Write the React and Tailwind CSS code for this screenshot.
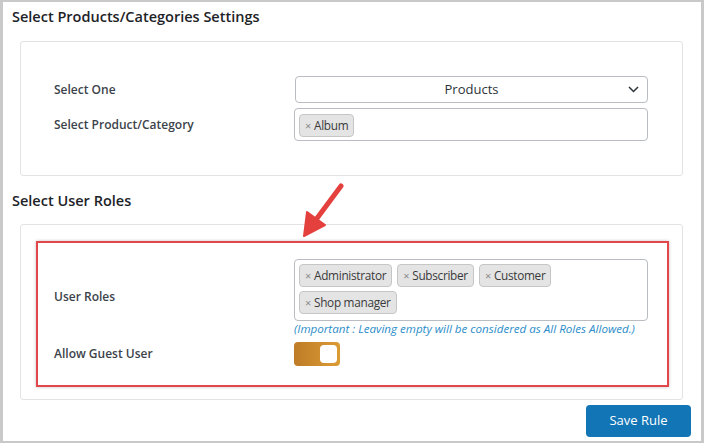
import { useState } from 'react';

// Small removable chip used inside the multi-selects
const Tag = ({ label }) => (
  <span className="inline-flex items-center h-[23px] px-[5px] gap-[3px] bg-[#e4e4e4] border border-[#c6c6c6] rounded-[4px] text-[11.8px] tracking-[-0.3px] text-[#3a3a3a] leading-none">
    <span className="text-[11px] text-[#8a8a8a]">×</span>
    {label}
  </span>
);

const Row = ({ label, children, className = '' }) => (
  <div className={`flex items-center ${className}`}>
    <div className="w-[240px] shrink-0 text-[12px] font-semibold text-[#3c434a]">{label}</div>
    <div className="w-[354px]">{children}</div>
  </div>
);

const App = () => {
  const [guest, setGuest] = useState(true);
  const roles = ['Administrator', 'Subscriber', 'Customer', 'Shop manager'];

  return (
    <div className="relative w-[704px] h-[443px] overflow-hidden bg-white border-[3px] border-t-2 border-b-2 border-[#c9c9c9] font-['Open_Sans',sans-serif]">

      {/* Products / categories */}
      <h2 className="mt-[5px] pl-[9px] text-[14.5px] leading-[20px] font-semibold text-[#1d2327]">
        Select Products/Categories Settings
      </h2>
      <div className="mt-[14px] ml-[17px] mr-[18px] border border-[#e3e3e3] rounded-[3px] pl-[33px] pt-[34px] pb-[34px]">
        <Row label="Select One">
          <div className="relative h-[27px] ml-px border border-[#b9bcc0] rounded-[4px] flex items-center justify-center text-[13px] text-[#2c3338]">
            Products
            <svg className="absolute right-[8px] top-[9px]" width="11" height="7" viewBox="0 0 11 7" fill="none">
              <path d="M1 1l4.5 4.5L10 1" stroke="#2c3338" strokeWidth="1.5" />
            </svg>
          </div>
        </Row>
        <Row label="Select Product/Category" className="mt-[5px]">
          <div className="h-[33px] border border-[#b9bcc0] rounded-[4px] px-[4px] pt-[3px]">
            <Tag label="Album" />
          </div>
        </Row>
      </div>

      {/* User roles */}
      <h2 className="mt-[15px] pl-[9px] text-[14.5px] leading-[20px] font-semibold text-[#1d2327]">
        Select User Roles
      </h2>
      <div className="mt-[13px] ml-[17px] mr-[18px] border border-[#e3e3e3] rounded-[3px] pt-[16px] pb-[12px] pl-[15px] pr-[13px]">
        <div className="border-2 border-[#e2474b] shadow-[0_0_3px_rgba(0,0,0,0.25)] pl-[16px] pt-[16px] pb-[19px]">
          <Row label="User Roles">
            <div className="h-[62px] border border-[#b9bcc0] rounded-[4px] px-[4px] pt-[4px] flex flex-wrap content-start gap-x-[5px] gap-y-[4px]">
              {roles.map(r => <Tag key={r} label={r} />)}
            </div>
            <div className="mt-px text-[11.6px] leading-[13px] italic text-[#2b8dc9] whitespace-nowrap">
              (Important : Leaving empty will be considered as All Roles Allowed.)
            </div>
          </Row>
          <Row label="Allow Guest User" className="mt-[7px]">
            <button
              onClick={() => setGuest(!guest)}
              className={`w-[46px] h-[24px] rounded-[4px] flex items-center px-[3px] ${guest ? 'justify-end bg-gradient-to-r from-[#be7c27] to-[#dc9c34]' : 'justify-start bg-[#c9c9c9]'}`}
            >
              <span className="w-[17px] h-[18px] bg-white rounded-[4px]" />
            </button>
          </Row>
        </div>
      </div>

      <div className="flex justify-end mt-[5px] mr-[10px]">
        <button className="w-[105px] h-[32px] rounded-[4px] bg-[#1175b6] text-white text-[13px]">
          Save Rule
        </button>
      </div>

      {/* annotation arrow */}
      <svg className="absolute left-[290px] top-[175px]" width="60" height="70" viewBox="290 175 60 70">
        <line x1="338" y1="184" x2="312" y2="219" stroke="#e4403d" strokeWidth="5" strokeLinecap="round" />
        <polygon points="301,234 304,210 322,223" fill="#e4403d" strokeLinejoin="round" stroke="#e4403d" strokeWidth="2" />
      </svg>
    </div>
  );
};

export default App;
